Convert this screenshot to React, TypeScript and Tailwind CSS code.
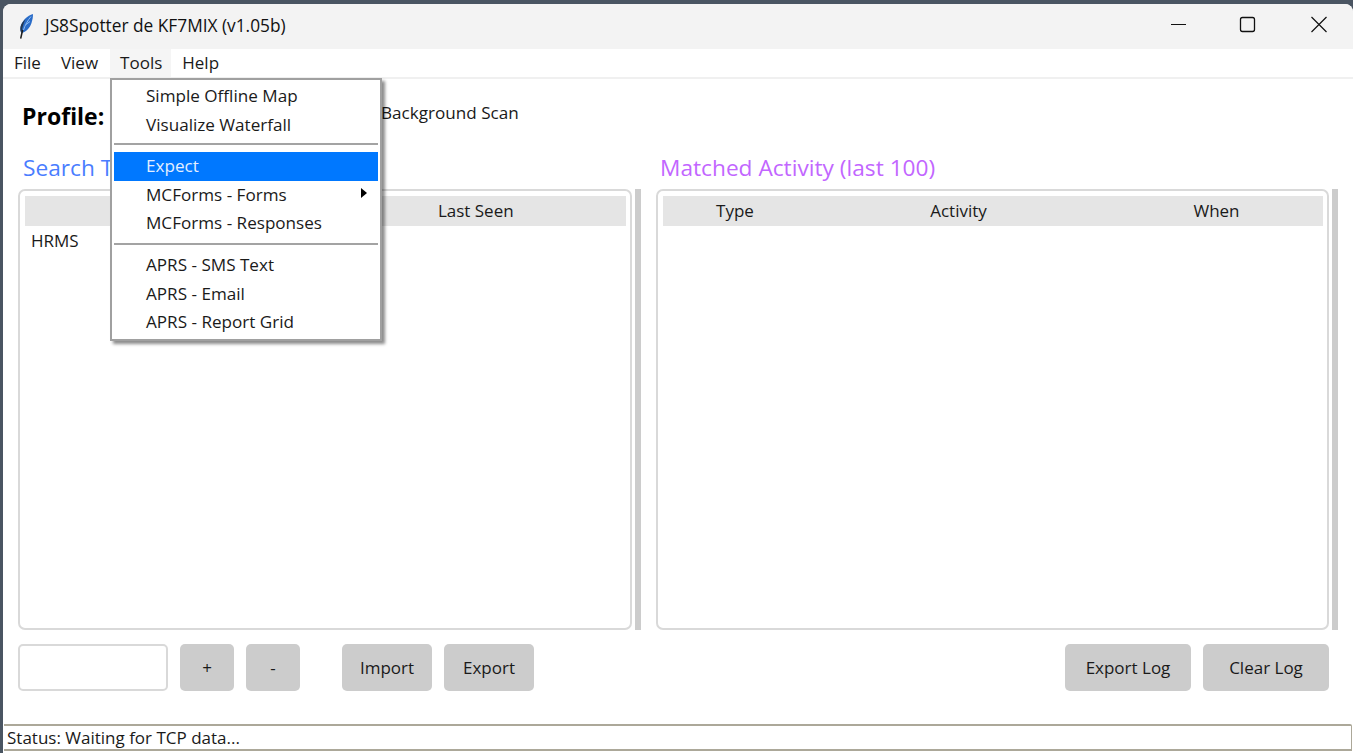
import React from "react";

const font = "font-['Open_Sans','Noto_Sans',sans-serif]";

function Feather() {
  return (
    <svg width="16" height="28" viewBox="0 0 16 28" className="shrink-0">
      <path d="M15 1C9.500 2.500 3.500 8 2.500 14c-.4 2.500 0 4.500 1 6 4.500-1 8.500-5 10-10 1-3.500 1.500-6.500 1.500-9z" fill="#2a6cc8" />
      <path d="M13 3.500C10 7 7 12 5.500 17M12 8.500 8 11.500" stroke="#8fbdf2" strokeWidth="1" fill="none" />
      <path d="M7.500 6C5 8.500 3.200 11 2.500 14c-.4 2.500 0 4.500 1 6 .5-4 1.500-9 4-14z" fill="#26384f" />
      <path d="M4.500 17.500 2.800 25" stroke="#1c1c1c" strokeWidth="1.500" strokeLinecap="round" fill="none" />
    </svg>
  );
}

function WindowControls() {
  return (
    <div className="flex items-center pb-[5px]">
      <svg width="70" height="20" viewBox="0 0 70 20">
        <path d="M30 10.500h15" stroke="#111" strokeWidth="1" />
      </svg>
      <svg width="70" height="20" viewBox="0 0 70 20">
        <rect x="29.500" y="3.500" width="14" height="14" rx="2" fill="none" stroke="#111" strokeWidth="1.300" />
      </svg>
      <svg width="72" height="20" viewBox="0 0 72 20">
        <path d="M30.500 3l15 15M45.500 3l-15 15" stroke="#111" strokeWidth="1.200" />
      </svg>
    </div>
  );
}

function MenuItem({ label, active, arrow }: { label: string; active?: boolean; arrow?: boolean }) {
  return (
    <div
      className={`relative h-[28.500px] flex items-center pl-[32px] ${active ? "bg-[#0078ff] text-[#e3efff]" : "text-[#1a1a1a]"}`}
    >
      {label}
      {arrow && (
        <span className="absolute right-[11px] top-[7px] w-0 h-0 border-y-[5px] border-y-transparent border-l-[6px] border-l-black" />
      )}
    </div>
  );
}

function ToolsMenu() {
  return (
    <div className="absolute left-[107px] -top-[1px] z-10 w-[272px] h-[263px] bg-white border-[2px] border-[#a0a0a0] shadow-[3px_3px_3px_rgba(0,0,0,0.45)] px-[2px] pt-[2px] text-[17.100px]">
      <MenuItem label="Simple Offline Map" />
      <MenuItem label="Visualize Waterfall" />
      <div className="h-[2px] mt-[4px] mb-[7px] bg-[#a3a3a3]" />
      <MenuItem label="Expect" active />
      <MenuItem label="MCForms - Forms" arrow />
      <MenuItem label="MCForms - Responses" />
      <div className="h-[2px] mt-[5px] mb-[6.500px] bg-[#a3a3a3]" />
      <MenuItem label="APRS - SMS Text" />
      <MenuItem label="APRS - Email" />
      <MenuItem label="APRS - Report Grid" />
    </div>
  );
}

function Panel({ children, className }: { children: React.ReactNode; className: string }) {
  return (
    <div className={`flex gap-[3px] h-[441px] ${className}`}>
      <div className="flex-1 border-2 border-[#d9d9d9] rounded-[7px] pl-[5px] pr-[4px] py-[5px] min-w-0">{children}</div>
      <div className="w-[6px] bg-[#cccccc]" />
    </div>
  );
}

function Button({ label, className }: { label: string; className: string }) {
  return (
    <button className={`h-[47px] rounded-[5px] bg-[#cccccc] text-[#1a1a1a] text-[17px] ${className}`}>{label}</button>
  );
}

export default function App() {
  return (
    <div className={`w-[1353px] h-[753px] bg-[#4a5562] pl-[3px] pt-[4px] overflow-hidden ${font}`}>
      <div className="h-[749px] bg-white rounded-t-[8px] overflow-hidden flex flex-col">
        <div className="h-[45px] shrink-0 bg-[#f3f3f3] flex items-center justify-between pl-[15px]">
          <div className="flex items-center gap-[11px] text-[17.300px] text-[#111]">
            <Feather />
            <span className="-mt-[2px]">JS8Spotter de KF7MIX (v1.05b)</span>
          </div>
          <WindowControls />
        </div>

        <div className="h-[30px] shrink-0 border-b-2 border-[#f0f0f0] flex items-start pl-[4px] text-[17px] text-[#1a1a1a]">
          <span className="h-[28px] flex items-center pl-[7px] pr-[7px]">File</span>
          <span className="h-[28px] flex items-center pl-[13px] pr-[12px]">View</span>
          <span className="h-[28px] flex items-center pl-[10px] pr-[9px] bg-[#f5f5f5]">Tools</span>
          <span className="h-[28px] flex items-center pl-[11px]">Help</span>
        </div>

        <div className="relative flex-1 flex flex-col pl-[15px] pr-[15px]">
          <ToolsMenu />
          <div className="h-[70px] shrink-0 flex items-center pl-[4px] pt-[4px]">
            <span className="font-bold text-[23px] text-black w-[359px]">Profile:</span>
            <span className="text-[17.100px] text-[#1a1a1a] -mt-[6px]">Background Scan</span>
          </div>

          <div className="flex gap-[15px] h-[40px] shrink-0 text-[22.700px]">
            <div className="w-[621px] pl-[5px] pt-[2px] text-[#4a7dff]">Search Terms</div>
            <div className="pl-[6px] pt-[2px] text-[#c266ff]">Matched Activity (last 100)</div>
          </div>

          <div className="flex gap-[15px] shrink-0 text-[17px] text-[#1a1a1a]">
            <Panel className="w-[623px]">
              <div className="grid grid-cols-2 h-[30px] bg-[#e5e5e5] items-center text-center">
                <span />
                <span>Last Seen</span>
              </div>
              <div className="pl-[6px] pt-[2px] h-[28px] flex items-center">HRMS</div>
            </Panel>
            <Panel className="w-[682px]">
              <div className="grid grid-cols-[144px_303px_1fr] h-[30px] bg-[#e5e5e5] items-center text-center">
                <span>Type</span>
                <span>Activity</span>
                <span>When</span>
              </div>
            </Panel>
          </div>

          <div className="flex items-center justify-between mt-[14px] shrink-0">
            <div className="flex items-center">
              <div className="w-[150px] h-[47px] rounded-[5px] border-2 border-[#d9d9d9] bg-white" />
              <Button label="+" className="w-[54px] ml-[12px]" />
              <Button label="-" className="w-[54px] ml-[12px]" />
              <Button label="Import" className="w-[90px] ml-[42px]" />
              <Button label="Export" className="w-[90px] ml-[12px]" />
            </div>
            <div className="flex items-center gap-[12px] mr-[9px]">
              <Button label="Export Log" className="w-[126px]" />
              <Button label="Clear Log" className="w-[126px]" />
            </div>
          </div>

          <div className="mt-auto -mx-[14px] mb-[2px] h-[27px] border-y-2 border-[#aca899] border-r border-r-[#aca899] rounded-tr-[2px] flex items-center pl-[3px] text-[17px] text-[#1a1a1a]">
            Status: Waiting for TCP data...
          </div>
        </div>
      </div>
    </div>
  );
}
